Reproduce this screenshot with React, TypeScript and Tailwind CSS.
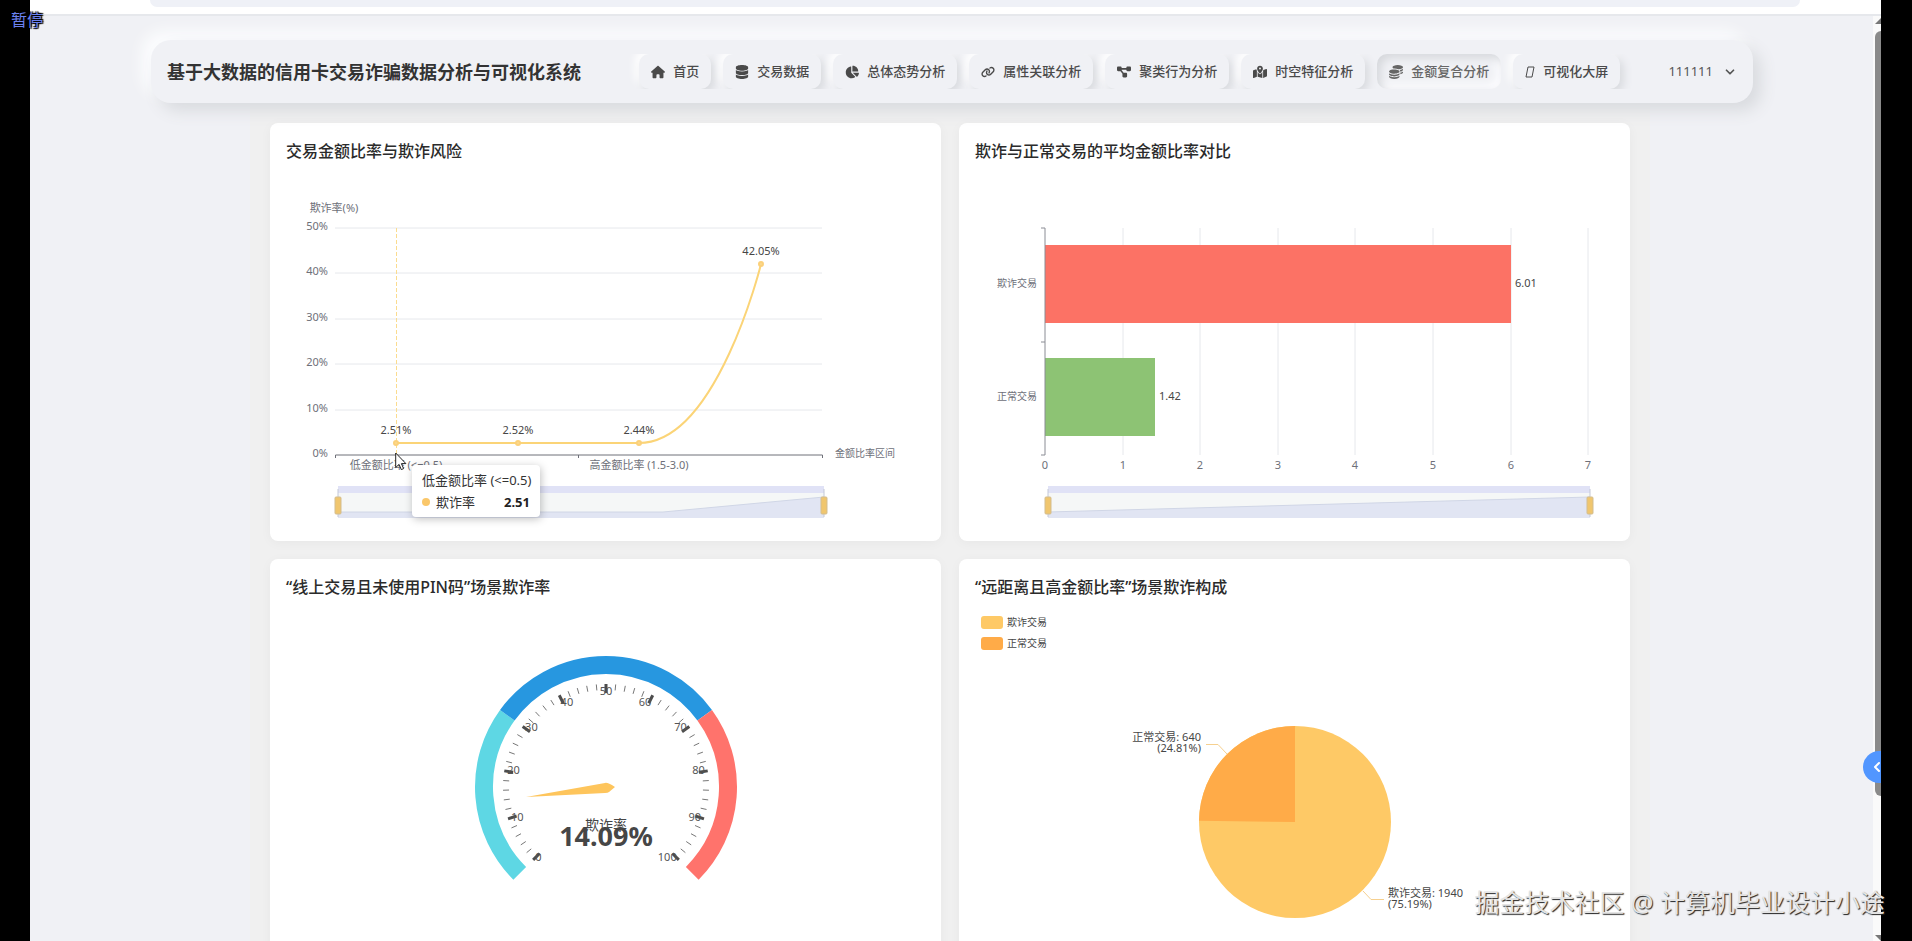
import { ChevronDown, ChevronLeft } from 'lucide-react';
import type { ReactNode } from 'react';
import type { IconType } from 'react-icons';
import {
  FaChartPie,
  FaCoins,
  FaDatabase,
  FaDiagramProject,
  FaHouse,
  FaLink,
  FaMapLocationDot,
} from 'react-icons/fa6';

const NAV_ITEMS: { label: string; icon?: IconType; active?: boolean }[] = [
  { label: '首页', icon: FaHouse },
  { label: '交易数据', icon: FaDatabase },
  { label: '总体态势分析', icon: FaChartPie },
  { label: '属性关联分析', icon: FaLink },
  { label: '聚类行为分析', icon: FaDiagramProject },
  { label: '时空特征分析', icon: FaMapLocationDot },
  { label: '金额复合分析', icon: FaCoins, active: true },
  { label: '可视化大屏' },
];

const AXIS = '#6e7079';
const GRID = '#e6e8ec';

function polar(cx: number, cy: number, r: number, deg: number) {
  const rad = (deg * Math.PI) / 180;
  return [cx + r * Math.cos(rad), cy - r * Math.sin(rad)];
}

function Card({ title, children }: { title: string; children: ReactNode }) {
  return (
    <section className="relative rounded-lg bg-white shadow-[0_2px_12px_rgba(0,0,0,0.04)]">
      <h2 className="px-4 pt-4 pb-px text-base leading-6 font-medium text-[#2b2b2b]">{title}</h2>
      {children}
    </section>
  );
}

function ChartSvg({ label, children }: { label: string; children: ReactNode }) {
  return (
    <svg
      viewBox="0 0 671 377"
      role="img"
      aria-label={label}
      className="block w-full"
      fontSize="11"
      fill={AXIS}
    >
      {children}
    </svg>
  );
}

/* Range slider under a chart: move strip, preview area and two handles */
function DataZoom({ x1, x2, preview }: { x1: number; x2: number; preview: string }) {
  return (
    <g>
      <rect x={x1} y="322" width={x2 - x1} height="32" rx="1" fill="#f5f7f7" />
      <polygon points={`${x1},354 ${preview} ${x2},354`} fill="#e1e5f3" />
      <polyline points={preview} fill="none" stroke="#d0d6e6" />
      <rect x={x1} y="322" width={x2 - x1} height="7" fill="#e0e2f6" />
      {[x1, x2].map((x) => (
        <g key={x}>
          <path d={`M${x} 325V353`} stroke="#c3c8d6" />
          <rect
            x={x - 3}
            y="333"
            width="6"
            height="17"
            rx="1"
            fill="#f0c66e"
            stroke="#d3bd8f"
            strokeWidth="1"
          />
        </g>
      ))}
    </g>
  );
}

const RATE_POINTS = [
  { x: 126, y: 279, label: '2.51%' },
  { x: 248, y: 279, label: '2.52%' },
  { x: 369, y: 279, label: '2.44%' },
  { x: 491, y: 100, label: '42.05%' },
];

function RateLineChart() {
  return (
    <ChartSvg label="交易金额比率与欺诈风险">
      <text x="64" y="48" textAnchor="middle">
        欺诈率(%)
      </text>
      {[50, 40, 30, 20, 10, 0].map((value, i) => {
        const y = 64 + Math.round(i * 45.4);
        return (
          <g key={value}>
            {value > 0 && <path d={`M65 ${y}H552`} stroke={GRID} />}
            <text x="58" y={y + 2} textAnchor="end">
              {value}%
            </text>
          </g>
        );
      })}
      <path d="M65.500 294V291H552.500V294M308.500 291V294" fill="none" stroke="#6e7079" />
      <text x="126" y="305" textAnchor="middle">
        {'低金额比率 (<=0.5)'}
      </text>
      <text x="369" y="305" textAnchor="middle">
        高金额比率 (1.5-3.0)
      </text>
      <text x="565" y="293" fontSize="10">
        金额比率区间
      </text>
      <path d="M126.500 64V291" stroke="#fbdc8f" strokeDasharray="4 2" />
      <path
        d="M126 279H369C447 279 491 100 491 100"
        fill="none"
        stroke="#fbd477"
        strokeWidth="2"
      />
      {RATE_POINTS.map((p) => (
        <g key={p.x}>
          <circle cx={p.x} cy={p.y} r="2" fill="#fcd98f" stroke="#fbd07a" strokeWidth="2" />
          <text x={p.x} y={p.y - 9} textAnchor="middle" fill="#464646">
            {p.label}
          </text>
        </g>
      ))}
      <DataZoom x1={68} x2={554} preview="68,348 393,348 554,333" />
    </ChartSvg>
  );
}

function RateTooltip() {
  return (
    <div
      role="tooltip"
      className="absolute top-[342px] left-[142px] flex h-13 w-32 flex-col justify-between rounded bg-white px-2.5 py-1.5 text-[13px] leading-[18px] text-[#333] shadow-[1px_2px_8px_rgba(0,0,0,0.25)]"
    >
      <p className="whitespace-nowrap">{'低金额比率 (<=0.5)'}</p>
      <p className="flex items-center">
        <span className="mr-1.5 size-2 rounded-full bg-[#fac76a]" />
        <span>欺诈率</span>
        <strong className="ml-auto font-bold text-[#222]">2.51</strong>
      </p>
    </div>
  );
}

function MousePointer() {
  return (
    <svg viewBox="0 0 12 19" className="absolute top-[329px] left-[125px] h-[19px] w-3">
      <path
        d="M.7 1v14.500l3.400-3.100 2.200 5.200 2.300-1-2.200-5h4.500z"
        fill="#fff"
        stroke="#222"
        strokeWidth="1"
      />
    </svg>
  );
}

const RATIO_BARS = [
  { name: '欺诈交易', value: '6.01', y: 81, width: 466, color: '#fc7265' },
  { name: '正常交易', value: '1.42', y: 194, width: 110, color: '#8dc374' },
];

function RatioBarChart() {
  return (
    <ChartSvg label="欺诈与正常交易的平均金额比率对比">
      {[0, 1, 2, 3, 4, 5, 6, 7].map((tick) => {
        const x = 86 + Math.round(tick * 77.6);
        return (
          <g key={tick}>
            {tick > 0 && <path d={`M${x} 64V291`} stroke={GRID} />}
            <text x={x} y="305" textAnchor="middle">
              {tick}
            </text>
          </g>
        );
      })}
      {RATIO_BARS.map((bar) => (
        <g key={bar.name}>
          <rect x="86" y={bar.y} width={bar.width} height="78" fill={bar.color} />
          <text x="78" y={bar.y + 42} textAnchor="end" fontSize="10">
            {bar.name}
          </text>
          <text x={86 + bar.width + 4} y={bar.y + 42} fill="#464646">
            {bar.value}
          </text>
        </g>
      ))}
      <path d="M82 64H86V291H82M82 178H86" fill="none" stroke="#8a8c94" />
      <DataZoom x1={89} x2={631} preview="89,348 631,333" />
    </ChartSvg>
  );
}

const GAUGE = { cx: 336, cy: 187 };
const GAUGE_BANDS = [
  { from: 0, to: 30, color: '#5ed7e4' },
  { from: 30, to: 70, color: '#2797e0' },
  { from: 70, to: 100, color: '#ff736c' },
];

function gaugePoint(value: number, r: number) {
  return polar(GAUGE.cx, GAUGE.cy, r, 225 - value * 2.7);
}

function FraudGauge() {
  return (
    <ChartSvg label="“线上交易且未使用PIN码”场景欺诈率">
      {GAUGE_BANDS.map((band) => {
        const [x1, y1] = gaugePoint(band.from, 122);
        const [x2, y2] = gaugePoint(band.to, 122);
        return (
          <path
            key={band.color}
            d={`M${x1} ${y1}A122 122 0 0 1 ${x2} ${y2}`}
            fill="none"
            stroke={band.color}
            strokeWidth="18"
          />
        );
      })}
      {Array.from({ length: 51 }, (_, i) => {
        const major = i % 5 === 0;
        const [x1, y1] = gaugePoint(i * 2, 103);
        const [x2, y2] = gaugePoint(i * 2, major ? 94 : 97);
        return (
          <path
            key={i}
            d={`M${x1} ${y1}L${x2} ${y2}`}
            stroke={major ? '#4d4d4d' : '#777'}
            strokeWidth={major ? 3 : 1}
          />
        );
      })}
      {Array.from({ length: 11 }, (_, i) => {
        const [x, y] = gaugePoint(i * 10, 100);
        const dx = x - GAUGE.cx;
        const nearTop = GAUGE.cy - y > 80;
        return (
          <text
            key={i}
            x={x}
            y={y + (nearTop ? 8 : 3)}
            textAnchor={dx < -40 ? 'start' : dx > 40 ? 'end' : 'middle'}
            fill="#555"
          >
            {i * 10}
          </text>
        );
      })}
      <path d="M256 197L335 183Q337 182 345 187L339 192Q338 193 335 193Z" fill="#fec55c" />
      <text x="336" y="230" textAnchor="middle" fontSize="14" fill="#464646">
        欺诈率
      </text>
      <text x="336" y="246" textAnchor="middle" fontSize="27" fontWeight="700" fill="#464646">
        14.09%
      </text>
    </ChartSvg>
  );
}

const PIE = { cx: 336, cy: 222, r: 96 };
const PIE_LEGEND = [
  { name: '欺诈交易', color: '#fec966' },
  { name: '正常交易', color: '#ffab48' },
];

function FraudPie() {
  const { cx, cy, r } = PIE;
  const [ex, ey] = polar(cx, cy, r, 90 - 360 * 0.7519);

  return (
    <ChartSvg label="“远距离且高金额比率”场景欺诈构成">
      {PIE_LEGEND.map((item, i) => (
        <g key={item.name}>
          <rect x="22" y={16 + i * 21} width="22" height="13" rx="3" fill={item.color} />
          <text x="48" y={26 + i * 21} fontSize="10" fill="#464646">
            {item.name}
          </text>
        </g>
      ))}
      <circle cx={cx} cy={cy} r={r} fill="#fec966" />
      <path d={`M${cx} ${cy}L${ex} ${ey}A${r} ${r} 0 0 1 ${cx} ${cy - r}Z`} fill="#ffab48" />
      <path
        d="M247 144.500H259L268 154M404 291L412 299.500H425"
        fill="none"
        stroke="#f6d08f"
      />
      <g fill="#464646">
        <text x="242" y="141" textAnchor="end">
          正常交易: 640
        </text>
        <text x="242" y="152" textAnchor="end">
          (24.81%)
        </text>
        <text x="429" y="297">
          欺诈交易: 1940
        </text>
        <text x="429" y="308">
          (75.19%)
        </text>
      </g>
    </ChartSvg>
  );
}

function NavBar() {
  return (
    <header className="mx-[121px] mt-6 flex h-[63px] items-center rounded-[20px] bg-[#f0f1f5] px-4 shadow-[8px_8px_16px_#d9dbdf,-8px_-8px_16px_#fdfeff]">
      <h1 className="text-lg font-bold whitespace-nowrap text-[#333]">
        基于大数据的信用卡交易诈骗数据分析与可视化系统
      </h1>
      <nav className="ml-auto flex gap-3 overflow-hidden px-4">
        {NAV_ITEMS.map(({ label, icon: Icon, active }) => (
          <a
            key={label}
            href="#"
            className={
              active
                ? 'flex h-[35px] items-center gap-2 rounded-[10px] px-3 text-[13px] font-medium whitespace-nowrap text-[#666] shadow-[inset_4px_4px_8px_#d6d8dc,inset_-4px_-4px_8px_#fdfdff]'
                : 'flex h-[35px] items-center gap-2 rounded-[10px] bg-[#f0f1f5] px-3 text-[13px] font-medium whitespace-nowrap text-[#4a4a4a] shadow-[4px_4px_8px_#d9dbdf,-4px_-4px_8px_#ffffff]'
            }
          >
            {Icon ? (
              <Icon className="h-3.5 w-auto" />
            ) : (
              <svg viewBox="0 0 10 12" className="h-3 w-2.5" fill="none" stroke="currentColor">
                <path d="M3 1h6L7 11H1z" />
              </svg>
            )}
            <span>{label}</span>
          </a>
        ))}
      </nav>
      <button
        type="button"
        className="ml-8 flex items-center gap-2.5 text-[13px] text-[#555]"
      >
        <span>111111</span>
        <ChevronDown className="size-3.5" strokeWidth={3} />
      </button>
    </header>
  );
}

function ScrollTrack() {
  return (
    <div className="absolute top-4 right-0 bottom-0 w-2 bg-[#fafafa]">
      <svg viewBox="0 0 8 6" className="absolute top-0.5 left-0.5 h-1.5 w-2">
        <path d="M0 6L6 0H8V6Z" fill="#777" />
      </svg>
      <div className="absolute top-[15px] right-0 h-[765px] w-1.5 rounded-l-full bg-[#8a8a8a]" />
      <svg viewBox="0 0 8 6" className="absolute bottom-0 left-0.5 h-1.5 w-2">
        <path d="M0 0L6 6H8V0Z" fill="#777" />
      </svg>
    </div>
  );
}

export default function App() {
  return (
    <div className="relative h-screen overflow-hidden bg-black pr-[31px] pl-[30px] font-['Noto_Sans','Noto_Sans_CJK_SC',sans-serif]">
      <div className="relative h-full overflow-hidden bg-[#f0f1f5]">
        <div className="h-4 border-b-2 border-[#e6e8ec] bg-white pr-[81px] pl-[120px]">
          <div className="h-[7px] rounded-b-lg bg-[#eff1f7]" />
        </div>

        <div className="relative z-10 pr-[7px]">
          <NavBar />
        </div>

        <div className="pr-[11px]">
          <main className="mx-auto -mt-2 w-full max-w-[1400px] bg-[#f0f0f0] px-5 pt-7">
            <div className="grid grid-cols-2 gap-[18px]">
              <Card title="交易金额比率与欺诈风险">
                <RateLineChart />
                <MousePointer />
                <RateTooltip />
              </Card>
              <Card title="欺诈与正常交易的平均金额比率对比">
                <RatioBarChart />
              </Card>
              <Card title="“线上交易且未使用PIN码”场景欺诈率">
                <FraudGauge />
              </Card>
              <Card title="“远距离且高金额比率”场景欺诈构成">
                <FraudPie />
              </Card>
            </div>
          </main>
        </div>

        <ScrollTrack />
        <button
          type="button"
          aria-label="展开侧栏"
          className="absolute top-[751px] -right-3.5 flex size-8 items-center rounded-full bg-[#5196ff] pl-1.5 text-white"
        >
          <ChevronLeft className="size-4" strokeWidth={3} />
        </button>
      </div>

      <p className="absolute top-2 left-[11px] z-20 text-base text-[#6c82f0] [text-shadow:1px_1px_1px_#000,-1px_-1px_1px_#000,1px_-1px_1px_#000,-1px_1px_1px_#000]">
        暂停
      </p>
      <p className="absolute right-[27px] bottom-[21px] z-20 text-[25px] leading-9 whitespace-nowrap text-[#e4e4e4] [text-shadow:1px_1px_1px_#222]">
        掘金技术社区 @ 计算机毕业设计小途
      </p>
    </div>
  );
}
